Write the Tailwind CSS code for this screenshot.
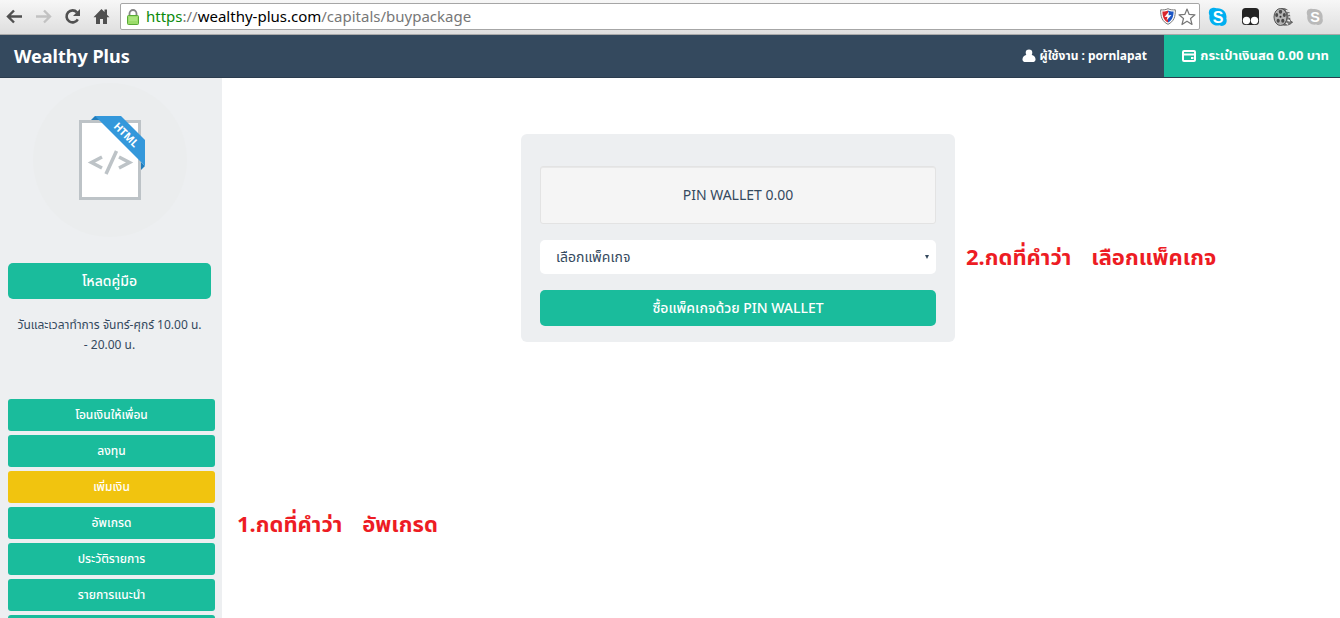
<!DOCTYPE html>
<html lang="th">
<head>
    <meta charset="UTF-8">
    <meta name="viewport" content="width=device-width, initial-scale=1">
    <title>Wealthy Plus</title>
    <script src="https://cdn.jsdelivr.net/npm/@tailwindcss/browser@4"></script>
</head>
<body class="flex h-screen flex-col overflow-hidden bg-white font-['Noto_Sans','Noto_Sans_Thai',sans-serif] text-[#34495e]">
    <!-- browser toolbar -->
    <div class="flex h-[35px] shrink-0 items-center border-b border-[#a9a9a9] bg-linear-to-b from-[#f7f7f7] to-[#dedede] pb-px">
        <div class="flex w-30 shrink-0 items-center gap-3 pl-1.5">
            <button type="button" aria-label="Back">
                <svg class="size-[17px]" viewBox="0 0 17 17" fill="none" stroke="#505050" stroke-width="2.4"><path d="M16 8.500H2.500M8 2.500L2 8.500l6 6"/></svg>
            </button>
            <button type="button" aria-label="Forward">
                <svg class="size-[17px]" viewBox="0 0 17 17" fill="none" stroke="#c2c2c2" stroke-width="2.400"><path d="M1 8.500h13.500M9 2.500l6 6-6 6"/></svg>
            </button>
            <button type="button" aria-label="Reload">
                <svg class="size-[17px]" viewBox="0 0 17 17"><path d="M13.800 11.300A6 6 0 1 1 13 4.300" fill="none" stroke="#505050" stroke-width="2.600"/><path d="M16 1v7H9z" fill="#505050"/></svg>
            </button>
            <button type="button" aria-label="Home">
                <svg class="size-[17px]" viewBox="0 0 17 17" fill="#505050"><path d="M8.500 1L0.500 9.300H3V16h4v-5h3v5h4V9.300h2.500L14 6.700V1.500h-2.500v2.600z"/></svg>
            </button>
        </div>
        <div class="flex h-[27px] flex-1 items-center rounded-xs border border-[#a6a6a6] bg-white pr-[3px] pl-1.5">
            <svg class="h-4 w-3 shrink-0" viewBox="0 0 12 16"><path d="M2.500 8V4.500a3.500 3.500 0 0 1 7 0V8" fill="none" stroke="#858585" stroke-width="1.800"/><rect x=".5" y="6.500" width="11" height="9" rx="1" fill="#9bdc6a" stroke="#58a936"/><path d="M2 9h8M2 11h8" stroke="#b9ec91"/></svg>
            <p class="ml-[7px] flex-1 pb-0.5 text-[15px] leading-5 text-[#777]"><span class="text-[#0b8a0b]">https</span>://<span class="text-black">wealthy-plus.com</span>/capitals/buypackage</p>
            <svg class="h-[17px] w-4 shrink-0" viewBox="0 0 16 17"><path d="M8 .700C5.500 2 3 2 .700 1.800.5 8.500 2 13.500 8 16.300 14 13.500 15.500 8.500 15.300 1.800 13 2 10.500 2 8 .700z" fill="#fff" stroke="#777"/><path d="M8 2.500C6 3.500 4 3.600 2.400 3.500 2.400 8.500 4 12.500 8 14.500z" fill="#d9262d"/><path d="M8 2.500c2 1 4 1.100 5.600 1 0 5-1.600 9-5.600 11z" fill="#1d56c4"/><path d="M9 3.500L4.500 9l3-.300L6.500 12.500 11.500 7l-3 .300z" fill="#fff"/></svg>
            <button type="button" aria-label="Bookmark" class="ml-0.5">
                <svg class="size-[18px]" viewBox="0 0 18 18" fill="#fff" stroke="#777" stroke-width="1.200" stroke-linejoin="round"><path d="M9 1l2.200 5.400 5.800.400-4.500 3.700L14 16.500l-5-3.300-5 3.300 1.500-6L1 6.800l5.800-.400z"/></svg>
            </button>
        </div>
        <div class="flex shrink-0 items-center gap-[13px] pr-4 pl-2">
            <svg class="size-5" viewBox="0 0 20 20"><path d="M2 2C5 0 7.500.800 8.500 1.200 15 .500 19.500 6 18.300 11.500 20 16 16 20.500 11.500 18.300 5 19.500.5 14.500 1.500 8.500.5 6 .5 4 2 2z" fill="#00aff0"/><text x="10" y="15.500" text-anchor="middle" font-family="Liberation Sans" font-weight="bold" font-size="16" fill="#fff">S</text></svg>
            <svg class="size-[19px]" viewBox="0 0 19 19"><rect x="1" y="1" width="17" height="17" rx="3.500" fill="#242424"/><circle cx="5.500" cy="13.500" r="3.700" fill="#fff"/><circle cx="13.500" cy="13.500" r="3.700" fill="#fff"/></svg>
            <svg class="size-5" viewBox="0 0 20 20"><path d="M8 1.500c7-.500 9 3.500 8.600 9 .2 3 1.400 4 2.900 4.500-2 3-6 3.500-10 3z" fill="#777" stroke="#444" stroke-width=".8"/><path d="M13 3.500l3 1M15 7h2M15.500 10h1.500M14.500 13l2.500 1M13 16l2 1.500" stroke="#eee" stroke-width="1.500"/><ellipse cx="7.500" cy="10" rx="6.500" ry="8.500" fill="#b5b5b5" stroke="#555"/><g fill="#4a4a4a"><ellipse cx="7.500" cy="4.700" rx="1.700" ry="2"/><ellipse cx="3.700" cy="8" rx="1.500" ry="2"/><ellipse cx="11.300" cy="8" rx="1.500" ry="2"/><ellipse cx="5.200" cy="13.700" rx="1.600" ry="2"/><ellipse cx="9.800" cy="13.700" rx="1.600" ry="2"/></g><circle cx="7.500" cy="9.800" r="1" fill="#333"/></svg>
            <svg class="size-[18px]" viewBox="0 0 20 20"><path d="M2 2C5 0 7.500.800 8.500 1.200 15 .500 19.500 6 18.300 11.500 20 16 16 20.500 11.500 18.300 5 19.500.5 14.500 1.500 8.500.5 6 .5 4 2 2z" fill="#b9b9b9"/><text x="10" y="15.500" text-anchor="middle" font-family="Liberation Sans" font-weight="bold" font-size="16" fill="#fff">S</text></svg>
        </div>
    </div>

    <!-- navbar -->
    <header class="flex h-[43px] shrink-0 border-b border-[#2b3c4e] bg-[#34495e] text-white">
        <a href="#" class="flex flex-1 items-center pl-3.5 text-lg font-bold">Wealthy Plus</a>
        <a href="#" class="flex items-center gap-1 pr-[17px] text-xs font-bold">
            <svg class="size-3.5" viewBox="0 0 14 14" fill="#fff"><circle cx="7" cy="3.800" r="3.300"/><path d="M4 6C1.500 6.500.5 8.500.5 10.500.5 12.500 2 13 3.500 13h7c1.500 0 3-.500 3-2.500S12.500 6.500 10 6z"/></svg>
            ผู้ใช้งาน : pornlapat
        </a>
        <a href="#" class="flex w-44 items-center justify-end gap-1 bg-[#1abc9c] pr-[11px] text-[13px] font-bold whitespace-nowrap">
            <svg class="size-3.5" viewBox="0 0 14 14"><rect x="1" y="2" width="12" height="10" rx="1" fill="none" stroke="#fff" stroke-width="2"/><path d="M1 5.500h12M9 9h2.500" stroke="#fff" stroke-width="2"/></svg>
            กระเป๋าเงินสด 0.00 บาท
        </a>
    </header>

    <div class="flex flex-1">
        <aside class="w-[222px] shrink-0 bg-[#edeff1] pr-[7px] pl-2">
            <div class="mr-1 pt-[5px] text-center">
                <div class="mx-auto flex size-[154px] items-center justify-center rounded-full bg-[#ebedee] pb-1 pl-1">
                    <svg class="h-[84px] w-[66px]" viewBox="0 0 66 84">
                        <rect x="1.500" y="5.500" width="59" height="77" fill="#fff" stroke="#bdc3c7" stroke-width="3"/>
                        <path d="M12 4l4-4h4v4zM62 46v8l4-4z" fill="#217dbb"/>
                        <path d="M16 0H42L66 24V50z" fill="#3498db"/>
                        <path d="M23 41l-10.500 5.500L23 52M40 41l10.500 5.500L40 52M37.500 35L27 58" fill="none" stroke="#bdc3c7" stroke-width="3.500"/>
                        <text x="47" y="22.500" transform="rotate(45 47 19)" text-anchor="middle" font-family="Open Sans" font-weight="bold" font-size="10.500" fill="#fff">HTML</text>
                    </svg>
                </div>
                <button type="button" class="mt-[26px] h-9 w-full rounded-[5px] bg-[#1abc9c] text-sm font-medium text-white">โหลดคู่มือ</button>
                <p class="mt-4 text-xs leading-5">วันและเวลาทำการ จันทร์-ศุกร์ 10.00 น.<br>- 20.00 น.</p>
            </div>
            <nav class="mt-11 flex flex-col gap-1 text-xs font-medium text-white">
                <a href="#" class="flex h-8 shrink-0 items-center justify-center rounded-[3px] bg-[#1abc9c]">โอนเงินให้เพื่อน</a>
                <a href="#" class="flex h-8 shrink-0 items-center justify-center rounded-[3px] bg-[#1abc9c]">ลงทุน</a>
                <a href="#" class="flex h-8 shrink-0 items-center justify-center rounded-[3px] bg-[#f1c40f]">เพิ่มเงิน</a>
                <div class="relative">
                    <a href="#" class="flex h-8 items-center justify-center rounded-[3px] bg-[#1abc9c]">อัพเกรด</a>
                    <p class="absolute top-0 left-full ml-[22px] flex gap-5 text-[22px] leading-8 font-bold whitespace-nowrap text-[#ed1c24]"><span>1.กดที่คำว่า</span><span>อัพเกรด</span></p>
                </div>
                <a href="#" class="flex h-8 shrink-0 items-center justify-center rounded-[3px] bg-[#1abc9c]">ประวัติรายการ</a>
                <a href="#" class="flex h-8 shrink-0 items-center justify-center rounded-[3px] bg-[#1abc9c]">รายการแนะนำ</a>
                <a href="#" aria-label="เมนู" class="flex h-8 shrink-0 rounded-[3px] bg-[#1abc9c]"></a>
            </nav>
        </aside>

        <main class="grid flex-1 grid-cols-[299fr_434fr_385fr] items-start pt-14">
            <form class="relative col-start-2 flex flex-col gap-4 rounded-md bg-[#edeff1] px-[19px] pt-8 pb-4 text-sm">
                <div class="flex h-[58px] items-center justify-center rounded-[3px] border border-[#e3e3e3] bg-[#f5f5f5] inset-shadow-2xs">PIN WALLET 0.00</div>
                <div class="relative">
                    <select aria-label="เลือกแพ็คเกจ" class="h-[34px] w-full appearance-none rounded-[5px] bg-white px-4 text-sm">
                        <option>เลือกแพ็คเกจ</option>
                    </select>
                    <svg class="pointer-events-none absolute top-[15px] right-[7px] h-1 w-1" viewBox="0 0 4 4"><path d="M0 0h4L2 4z" fill="#34495e"/></svg>
                    <p class="absolute top-0 left-full ml-[30px] flex gap-5 text-[22px] leading-8 font-bold whitespace-nowrap text-[#ed1c24]"><span>2.กดที่คำว่า</span><span>เลือกแพ็คเกจ</span></p>
                </div>
                <button type="submit" class="h-9 rounded-[5px] bg-[#1abc9c] font-medium text-white">ซื้อแพ็คเกจด้วย PIN WALLET</button>
            </form>
        </main>
    </div>
</body>
</html>
